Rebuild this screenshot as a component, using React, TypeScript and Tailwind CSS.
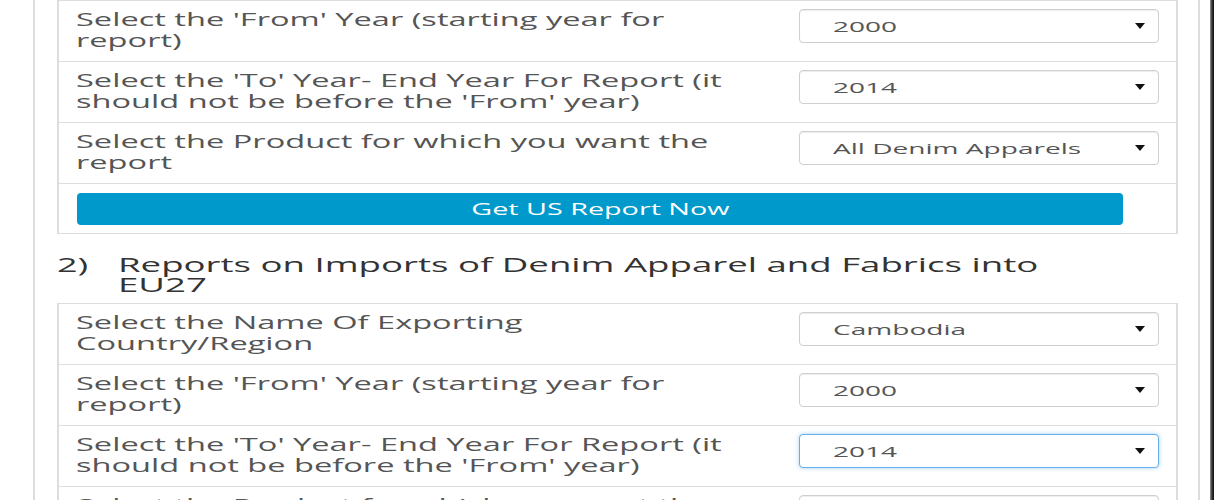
import type { ReactNode } from 'react';

// The page is a wide, stretched report form: text is widened with scale-x on inline blocks.

type Row = { label: [string, string]; value: string; focused?: boolean };

const US_ROWS: Row[] = [
  { label: ["Select the 'From' Year (starting year for", 'report)'], value: '2000' },
  { label: ["Select the 'To' Year- End Year For Report (it", "should not be before the 'From' year)"], value: '2014' },
  { label: ['Select the Product for which you want the', 'report'], value: 'All Denim Apparels' },
];

const EU_ROWS: Row[] = [
  { label: ['Select the Name Of Exporting', 'Country/Region'], value: 'Cambodia' },
  { label: ["Select the 'From' Year (starting year for", 'report)'], value: '2000' },
  { label: ["Select the 'To' Year- End Year For Report (it", "should not be before the 'From' year)"], value: '2014', focused: true },
  { label: ['Select the Product for which you want the', 'report'], value: 'All Denim Apparels' },
];

function Caret() {
  return (
    <svg width="10" height="6" viewBox="0 0 10 6" className="shrink-0">
      <path d="M0 0h10L5 6z" fill="#111" />
    </svg>
  );
}

function Select({ value, focused }: { value: string; focused?: boolean }) {
  return (
    <div
      className={`w-[360px] h-[34px] rounded-[4px] border bg-white flex items-center justify-between pl-[33px] pr-[13px]
        ${focused
          ? 'border-[#66afe9] shadow-[0_0_4px_rgba(102,175,233,0.6)]'
          : 'border-[#cfcfcf] shadow-[inset_0_1px_1px_rgba(0,0,0,0.075)]'}`}
    >
      <span className="inline-block origin-left scale-x-[1.87] text-[15px] leading-[20px] text-[#555] whitespace-nowrap">
        {value}
      </span>
      <Caret />
    </div>
  );
}

function FormRow({ row }: { row: Row }) {
  return (
    <div className="flex border-t border-[#ddd] pt-[8px] pb-[10px]">
      <div className="flex-1 pl-[17px] text-[18px] leading-[21px] text-[#555] whitespace-nowrap">
        <span className="inline-block origin-left scale-x-[1.81]">
          {row.label[0]}
          <br />
          {row.label[1]}
        </span>
      </div>
      <div className="pr-[17px]">
        <Select value={row.value} focused={row.focused} />
      </div>
    </div>
  );
}

function FormTable({ children }: { children: ReactNode }) {
  return <div className="border-x-2 border-b border-[#ddd]">{children}</div>;
}

export default function App() {
  return (
    <div className="w-[1216px] h-[500px] overflow-hidden bg-white flex font-['Open_Sans',sans-serif]">
      {/* ── Page container ─────────────────────────────────────────────── */}
      <div className="ml-[33px] w-[1167px] shrink-0 border-x-2 border-[#ddd] pl-[22px] pr-[20px]">
        <FormTable>
          {US_ROWS.map((r) => (
            <FormRow key={r.label[0]} row={r} />
          ))}
          <div className="border-t border-[#ddd] pt-[9px] pb-[8px] pl-[18px]">
            <button className="w-[1046px] h-[32px] rounded-[4px] bg-[#0099cc] text-white text-[17px] leading-[20px] flex items-center justify-center">
              <span className="inline-block scale-x-[1.69]">Get US Report Now</span>
            </button>
          </div>
        </FormTable>

        {/* ── Section 2 heading ──────────────────────────────────────────── */}
        <div className="flex mt-[21px] mb-[8px] text-[20px] leading-[20px] font-medium text-[#333]">
          <div className="w-[61px] shrink-0">
            <span className="inline-block origin-left scale-x-[1.8]">2)</span>
          </div>
          <div className="whitespace-nowrap">
            <span className="inline-block origin-left scale-x-[1.83]">
              Reports on Imports of Denim Apparel and Fabrics into
              <br />
              EU27
            </span>
          </div>
        </div>

        <FormTable>
          {EU_ROWS.map((r) => (
            <FormRow key={r.label[0] + r.value} row={r} />
          ))}
        </FormTable>
      </div>

      {/* window edge shadow */}
      <div className="ml-[10px] w-[4px] shrink-0 bg-gradient-to-r from-[#9a9a9a] via-[#333] to-[#111]" />
    </div>
  );
}
